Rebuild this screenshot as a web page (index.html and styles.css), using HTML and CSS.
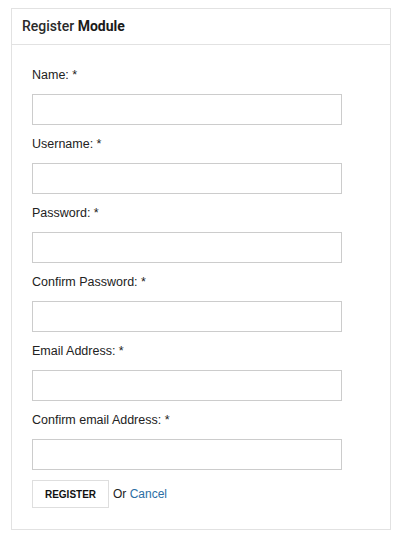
FILE: index.html
```html
<!DOCTYPE html>
<html>
<head>
<meta charset="utf-8">
<link rel="stylesheet" href="styles.css">
</head>
<body>
<div class="card">
  <div class="card-header"><span class="light">Register</span> <span class="strong">Module</span></div>
  <form class="card-body">
    <div class="field"><label>Name: *</label><input type="text"></div>
    <div class="field"><label>Username: *</label><input type="text"></div>
    <div class="field"><label>Password: *</label><input type="password"></div>
    <div class="field"><label>Confirm Password: *</label><input type="password"></div>
    <div class="field"><label>Email Address: *</label><input type="text"></div>
    <div class="field last"><label>Confirm email Address: *</label><input type="text"></div>
    <div class="actions">
      <button type="button" class="btn">REGISTER</button>
      <span class="or">Or <a href="#" class="cancel">Cancel</a></span>
    </div>
  </form>
</div>
</body>
</html>
```
FILE: styles.css
```css
html, body {
  margin: 0;
  padding: 0;
  background: #ffffff;
}
body {
  padding: 8px 9px 0 11px;
  font-family: "Liberation Sans", Arial, sans-serif;
  color: #222;
}
.card {
  width: 378px;
  border: 1px solid #e2e2e2;
  background: #fff;
}
.card-header {
  height: 35px;
  line-height: 35px;
  padding-left: 10px;
  border-bottom: 1px solid #e2e2e2;
  font-family: Roboto, "Liberation Sans", sans-serif;
  font-size: 14px;
}
.light { font-weight: 500; color: #2a2a2a; }
.strong { font-weight: 700; color: #1a1a1a; }
.card-body {
  padding: 23px 20px 21px 20px;
  margin: 0;
  display: flex;
  flex-direction: column;
}
.field {
  display: flex;
  flex-direction: column;
  gap: 12px;
  margin-bottom: 12px;
}
.field.last { margin-bottom: 10px; }
.field label {
  font-size: 12.5px;
  line-height: 14px;
  color: #222;
}
.field input {
  box-sizing: border-box;
  width: 310px;
  height: 31px;
  margin: 0;
  border: 1px solid #cccccc;
  background: #fff;
  outline: none;
}
.actions {
  display: flex;
  align-items: center;
  gap: 4px;
}
.btn {
  box-sizing: border-box;
  width: 77px;
  height: 28px;
  margin: 0;
  padding: 0;
  border: 1px solid #dedede;
  background: #fff;
  font-family: "Liberation Sans", Arial, sans-serif;
  font-weight: 700;
  font-size: 10px;
  color: #111;
}
.or {
  font-size: 12px;
  color: #222;
}
.cancel {
  color: #2b6ea4;
  text-decoration: none;
}
```
